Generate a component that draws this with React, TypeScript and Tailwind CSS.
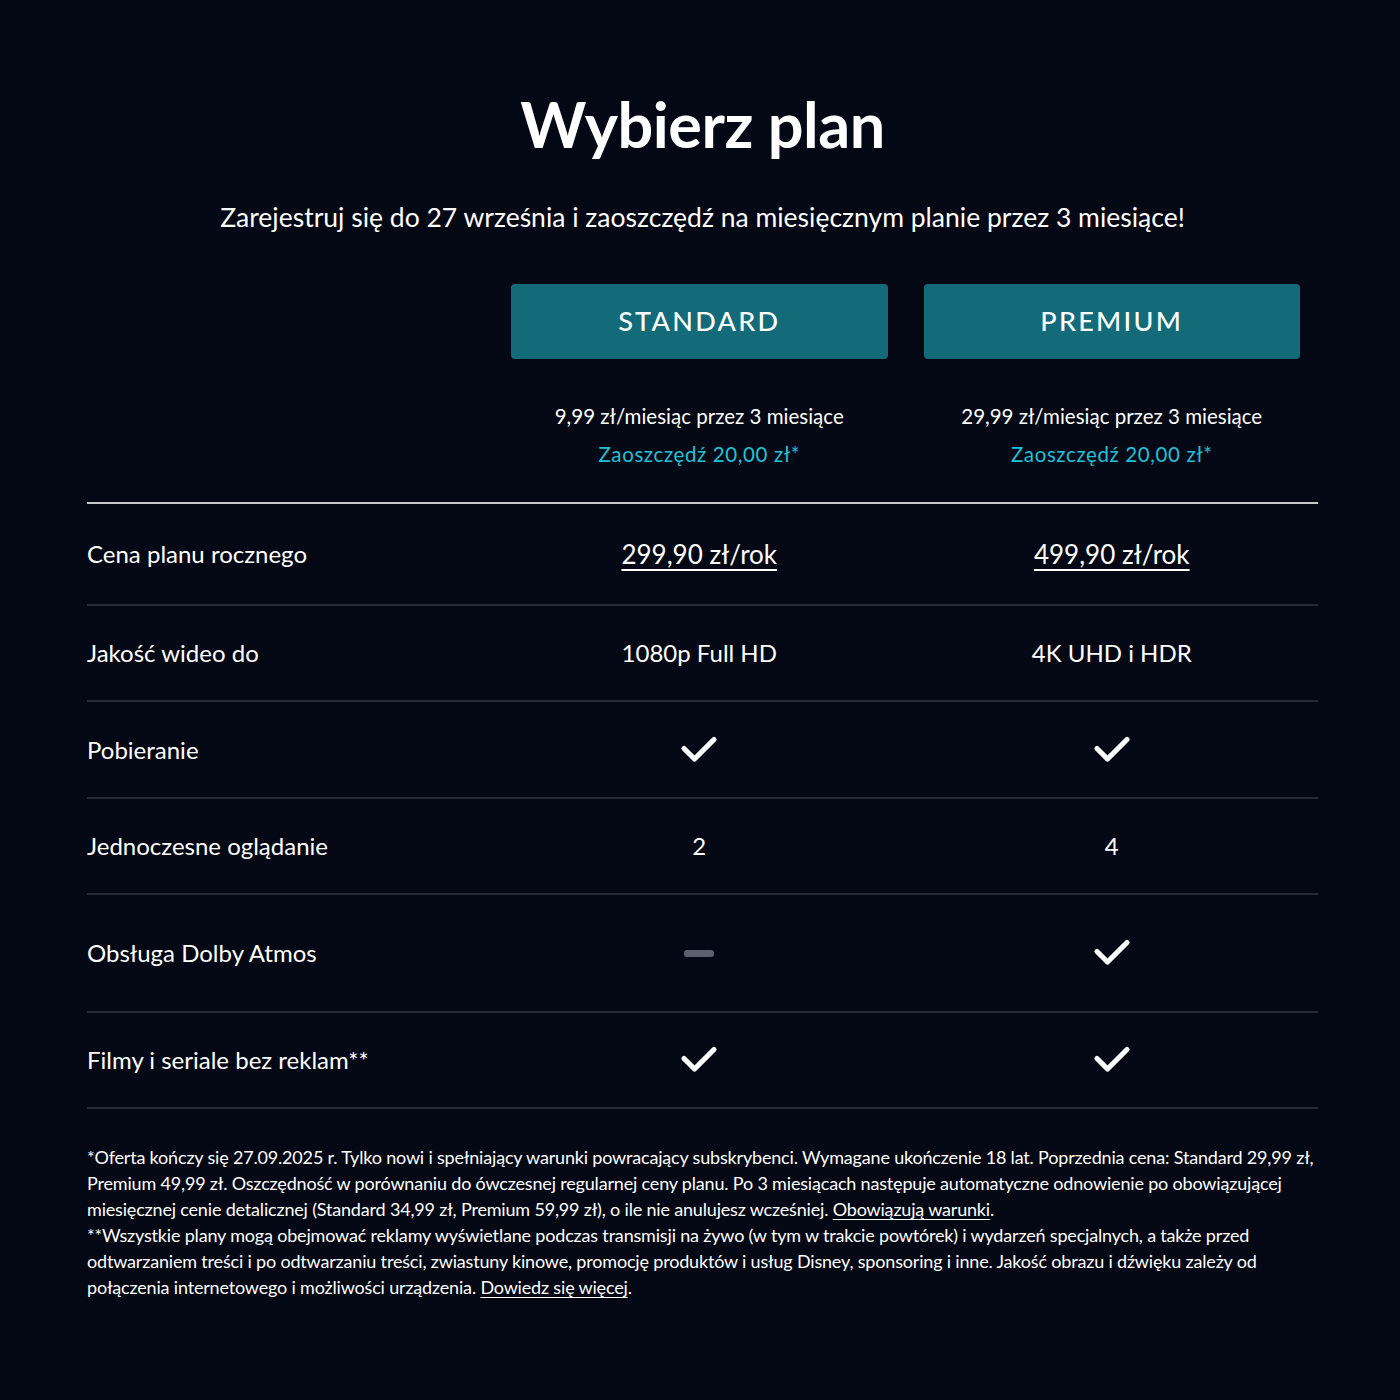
import React from "react";

const Check = () => (
  <svg width="38" height="30" viewBox="0 0 38 30" fill="none">
    <path d="M4 13.5 L14.5 24 L34 4.5" stroke="white" strokeWidth="5.2" strokeLinecap="round" strokeLinejoin="round" />
  </svg>
);

const Dash = () => <div className="w-[30px] h-[7px] rounded-[3px] bg-[#5b5f6e]" />;

type Row = { label: string; a: React.ReactNode; b: React.ReactNode; h: string };

const rows: Row[] = [
  {
    label: "Cena planu rocznego",
    a: <span className="text-[26px] underline underline-offset-[5px] decoration-[1.5px]">299,90 zł/rok</span>,
    b: <span className="text-[26px] underline underline-offset-[5px] decoration-[1.5px]">499,90 zł/rok</span>,
    h: "h-[102px]",
  },
  { label: "Jakość wideo do", a: <span className="text-[24px]">1080p Full HD</span>, b: <span className="text-[24px]">4K UHD i HDR</span>, h: "h-[96px]" },
  { label: "Pobieranie", a: <Check />, b: <Check />, h: "h-[97px]" },
  { label: "Jednoczesne oglądanie", a: <span className="text-[24px]">2</span>, b: <span className="text-[24px]">4</span>, h: "h-[96px]" },
  { label: "Obsługa Dolby Atmos", a: <Dash />, b: <Check />, h: "h-[118px]" },
  { label: "Filmy i seriale bez reklam**", a: <Check />, b: <Check />, h: "h-[96px]" },
];

export default function App() {
  return (
    <div className="min-h-[1400px] w-full bg-[#040714] text-white font-['Lato',sans-serif]">
      <div className="w-[1231px] ml-[87px] pt-[88px]">
        <h1 className="text-center text-[63px] font-bold leading-[72px] tracking-[-0.5px]">Wybierz plan</h1>
        <p className="text-center text-[26.5px] leading-[32px] mt-[41px]">
          Zarejestruj się do 27 września i zaoszczędź na miesięcznym planie przez 3 miesiące!
        </p>

        <div className="grid grid-cols-[406px_1fr_1fr] mt-[51px]">
          <div />
          {[
            { name: "STANDARD", price: "9,99 zł/miesiąc przez 3 miesiące" },
            { name: "PREMIUM", price: "29,99 zł/miesiąc przez 3 miesiące" },
          ].map((p) => (
            <div key={p.name} className="flex flex-col items-center px-[18px]">
              <div className="w-full h-[75px] rounded-[4px] bg-[#136b7a] flex items-center justify-center text-[27px] tracking-[2.3px] font-medium">
                {p.name}
              </div>
              <div className="mt-[44px] text-[20.5px] leading-[26px]">{p.price}</div>
              <div className="mt-[12px] text-[20.5px] leading-[26px] tracking-[0.6px] text-[#1fc1d8]">Zaoszczędź 20,00 zł*</div>
            </div>
          ))}
        </div>

        <div className="mt-[35px] border-t-2 border-[#c8c9cc]">
          {rows.map((r) => (
            <div key={r.label} className={`grid grid-cols-[406px_1fr_1fr] items-center border-b-2 border-[#272a36] ${r.h}`}>
              <div className="text-[24px]">{r.label}</div>
              <div className="flex justify-center">{r.a}</div>
              <div className="flex justify-center">{r.b}</div>
            </div>
          ))}
        </div>

        <div className="mt-[35px] text-[18px] leading-[26px] tracking-[-0.18px]">
          <p>
            *Oferta kończy się 27.09.2025 r. Tylko nowi i spełniający warunki powracający subskrybenci. Wymagane ukończenie 18 lat. Poprzednia cena: Standard 29,99 zł, Premium 49,99 zł. Oszczędność w porównaniu do ówczesnej regularnej ceny planu. Po 3 miesiącach następuje automatyczne odnowienie po obowiązującej miesięcznej cenie detalicznej (Standard 34,99 zł, Premium 59,99 zł), o ile nie anulujesz wcześniej.{" "}
            <span className="underline underline-offset-[3px]">Obowiązują warunki</span>.
          </p>
          <p>
            **Wszystkie plany mogą obejmować reklamy wyświetlane podczas transmisji na żywo (w tym w trakcie powtórek) i wydarzeń specjalnych, a także przed odtwarzaniem treści i po odtwarzaniu treści, zwiastuny kinowe, promocję produktów i usług Disney, sponsoring i inne. Jakość obrazu i dźwięku zależy od połączenia internetowego i możliwości urządzenia.{" "}
            <span className="underline underline-offset-[3px]">Dowiedz się więcej</span>.
          </p>
        </div>
      </div>
    </div>
  );
}
